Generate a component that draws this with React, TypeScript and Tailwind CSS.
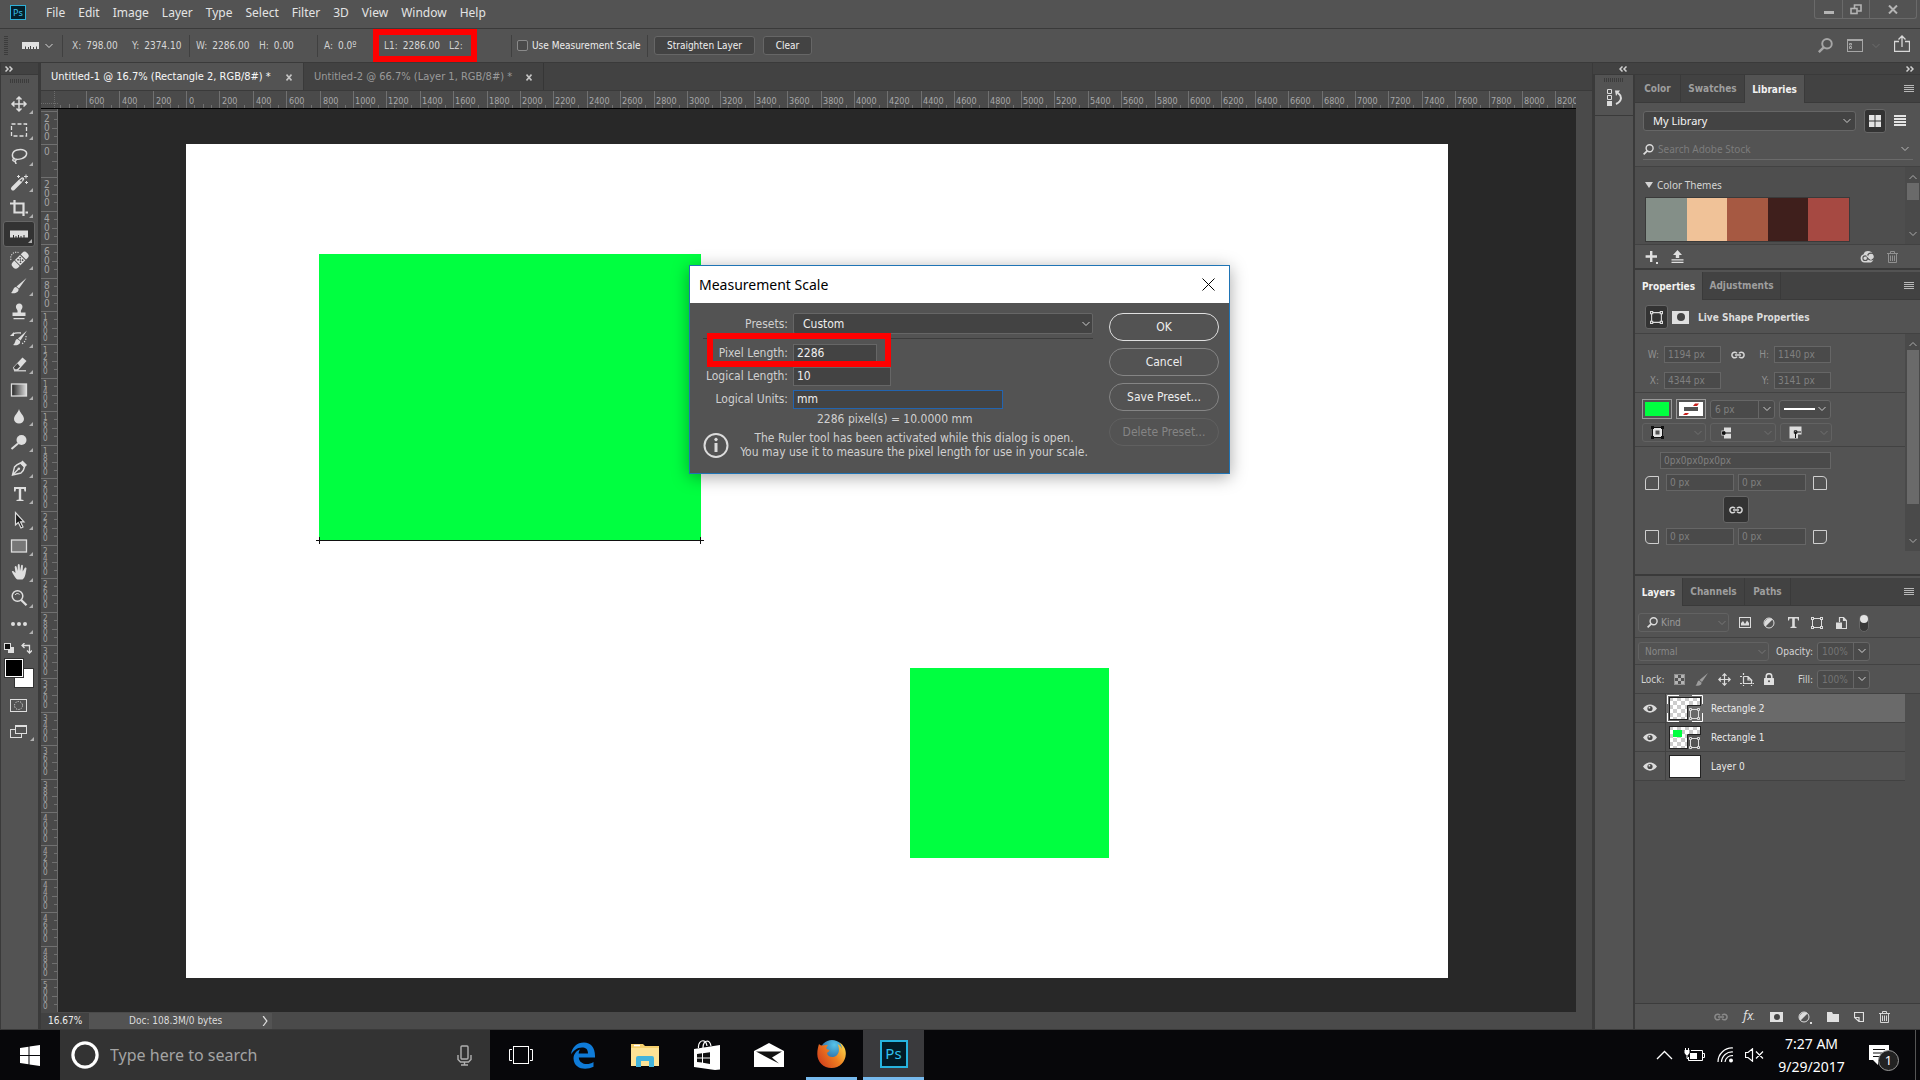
import React, { ReactNode } from "react";

const UI = 'font-["DejaVu_Sans_Condensed","Noto_Sans",sans-serif]';
const SEGOE = 'font-["Noto_Sans","Open_Sans",sans-serif]';

/* ---------- small shared pieces ---------- */

function Chevron({ className = "", dir = "down", size = 8 }: { className?: string; dir?: "down" | "up" | "right"; size?: number }) {
  const d = dir === "down" ? "M0.5 2 L4 5.5 L7.5 2" : dir === "up" ? "M0.5 6 L4 2.5 L7.5 6" : "M2.5 0 L5.5 4 L2.5 8";
  return (
    <svg width={size} height={size} viewBox="0 0 8 8" fill="none" stroke="currentColor" strokeWidth="1" className={`shrink-0 ${className}`} aria-hidden="true">
      <path d={d} />
    </svg>
  );
}

function Grip({ vertical = false }: { vertical?: boolean }) {
  return (
    <svg width={vertical ? 4 : 20} height={vertical ? 20 : 4} className="shrink-0" aria-hidden="true">
      {Array.from({ length: 10 }, (_, i) =>
        vertical ? <rect key={i} x="0" y={i * 2} width="4" height="1" fill="#3c3c3c" /> : <rect key={i} x={i * 2} y="0" width="1" height="4" fill="#3c3c3c" />,
      )}
    </svg>
  );
}

function DoubleArrow({ left = false }: { left?: boolean }) {
  return (
    <svg width="8" height="6" viewBox="0 0 8 6" fill="none" stroke="#d0d0d0" strokeWidth="1.5" className={left ? "-scale-x-100" : ""} aria-hidden="true">
      <path d="M0.5 0.5 L3 3 L0.5 5.5 M4.5 0.5 L7 3 L4.5 5.5" />
    </svg>
  );
}

function PanelMenu() {
  return (
    <button aria-label="Panel menu" className="ml-auto mr-[6px] flex h-full items-center">
      <svg width="10" height="8" aria-hidden="true">
        {[0, 2, 4, 6].map((y) => (
          <rect key={y} x="0" y={y} width="10" height="1" fill="#b8b8b8" />
        ))}
      </svg>
    </button>
  );
}

function Link({ color = "#d6d6d6" }: { color?: string }) {
  return (
    <svg width="14" height="8" viewBox="0 0 14 8" fill="none" stroke={color} strokeWidth="1.5" aria-hidden="true">
      <path d="M6 2.4 A2.8 2.8 0 1 0 6 5.6 M8 2.4 A2.8 2.8 0 1 1 8 5.6 M4 4 H10" />
    </svg>
  );
}

function Magnifier({ color = "#dcdcdc", size = 11 }: { color?: string; size?: number }) {
  return (
    <svg width={size} height={size} viewBox="0 0 11 11" fill="none" stroke={color} strokeWidth="1.4" className="shrink-0" aria-hidden="true">
      <circle cx="6.6" cy="4.2" r="3.5" />
      <path d="M4.2 6.8 L0.6 10.4" strokeWidth="1.8" />
    </svg>
  );
}

function ShapeIcon({ size = 12 }: { size?: number }) {
  return (
    <svg width={size} height={size} viewBox="0 0 12 12" fill="none" stroke="#dcdcdc" aria-hidden="true">
      <path d="M2.5 1.5 H9.5 M2.5 10.5 H9.5 M1.5 2.5 V9.5 M10.5 2.5 V9.5" />
      {[[0.5, 0.5], [9.5, 0.5], [0.5, 9.5], [9.5, 9.5]].map(([x, y]) => (
        <rect key={`${x}-${y}`} x={x} y={y} width="2" height="2" />
      ))}
    </svg>
  );
}

function Trash({ color = "#d6d6d6" }: { color?: string }) {
  return (
    <svg width="11" height="12" viewBox="0 0 11 12" fill="none" stroke={color} aria-hidden="true">
      <path d="M0 2.5 H11 M3.5 2 V0.5 H7.5 V2 M1.5 2.5 V11.5 H9.5 V2.5 M3.5 4.5 V10 M5.5 4.5 V10 M7.5 4.5 V10" />
    </svg>
  );
}

/* ---------- menu and options bars ---------- */

const menus = ["File", "Edit", "Image", "Layer", "Type", "Select", "Filter", "3D", "View", "Window", "Help"];

function MenuBar() {
  return (
    <header className={`flex h-[29px] shrink-0 items-start border-b border-[#3a3a3a] pl-[10px] pr-[3px] text-[12px] text-[#e4e4e4] ${SEGOE}`}>
      <span className="mt-[5px] flex h-[15px] w-4 items-center justify-center border border-[#2fb0d8] bg-[#03202c] text-[9px] text-[#3cc0ea]">Ps</span>
      <nav className="ml-5 flex h-[25px] items-center gap-[13px]">
        {menus.map((m) => (
          <button key={m}>{m}</button>
        ))}
      </nav>
      <div className="ml-auto flex h-[19px] rounded-b-[3px] border border-t-0 border-[#6a6a6a] text-[#b4b4b4]">
        <button aria-label="Minimize" className="flex w-7 justify-center border-r border-[#6a6a6a] pt-[11px]">
          <span className="h-[3px] w-[10px] bg-[#b4b4b4]" />
        </button>
        <button aria-label="Restore" className="flex w-[27px] justify-center border-r border-[#6a6a6a] pt-1">
          <svg width="12" height="11" viewBox="0 0 12 11" fill="none" stroke="currentColor" strokeWidth="1.6">
            <path d="M4.5 4 V1 H11 V7 H7.5" />
            <rect x="1" y="4.5" width="6" height="5" />
          </svg>
        </button>
        <button aria-label="Close" className="flex w-[46px] justify-center pt-[5px]">
          <svg width="10" height="9" viewBox="0 0 10 9" stroke="currentColor" strokeWidth="2">
            <path d="M1 0.5 L9 8.5 M9 0.5 L1 8.5" />
          </svg>
        </button>
      </div>
    </header>
  );
}

function Sep() {
  return <span className="h-[22px] w-px shrink-0 bg-[#404040]" />;
}

function RulerGlyph() {
  return (
    <svg width="17" height="7" viewBox="0 0 17 7" className="shrink-0" aria-hidden="true">
      <path d="M0 0 H17 V7 H0 Z" fill="#e0e0e0" />
      <path d="M3.5 4.5 V7 M6.5 5 V7 M8.5 4 V7 M11.5 5 V7 M14.5 4.5 V7" stroke="#444" />
    </svg>
  );
}

function Measure({ label, value, className }: { label: string; value: string; className: string }) {
  return (
    <span className={`flex shrink-0 gap-[5px] ${className}`}>
      <span className="text-[#cfcfcf]">{label}</span>
      <span>{value}</span>
    </span>
  );
}

function OptionsBar() {
  return (
    <div className={`flex h-[34px] shrink-0 items-center border-b border-[#3a3a3a] pl-1 pr-[10px] text-[10px] text-[#d8d8d8] ${UI}`}>
      <Grip vertical />
      <button aria-label="Ruler tool preset" className="ml-[14px] flex w-10 items-center gap-[6px]">
        <RulerGlyph />
        <Chevron />
      </button>
      <Sep />
      <Measure label="X:" value="798.00" className="ml-[9px] w-[60px]" />
      <Measure label="Y:" value="2374.10" className="w-[57px]" />
      <Sep />
      <Measure label="W:" value="2286.00" className="ml-[6px] w-[63px]" />
      <Measure label="H:" value="0.00" className="w-[58px]" />
      <Sep />
      <Measure label="A:" value="0.0º" className="ml-[6px] w-[49px]" />
      <div className="flex h-[33px] w-[104px] shrink-0 items-center border-[6px] border-[#fe0000] pl-[5px]">
        <Measure label="L1:" value="2286.00" className="w-[65px]" />
        <Measure label="L2:" value="" className="" />
      </div>
      <span className="w-[34px] shrink-0" />
      <Sep />
      <label className="ml-[5px] flex w-[130px] shrink-0 items-center gap-1 whitespace-nowrap text-[#ededed]">
        <input type="checkbox" className="h-[11px] w-[11px] shrink-0 appearance-none rounded-[2px] border border-[#8a8a8a] bg-[#4a4a4a]" />
        Use Measurement Scale
      </label>
      <Sep />
      <button className="ml-[6px] h-[19px] w-[101px] shrink-0 rounded-[3px] border border-[#666] bg-[#434343] text-[#f0f0f0]">Straighten Layer</button>
      <button className="ml-2 h-[19px] w-[49px] shrink-0 rounded-[3px] border border-[#666] bg-[#434343] text-[#f0f0f0]">Clear</button>
      <div className="ml-auto flex items-center">
        <button aria-label="Search">
          <Magnifier size={15} color="#a6a6a6" />
        </button>
        <button aria-label="Workspace" className="ml-[14px] flex items-center gap-[9px] text-[#6c6c6c]">
          <svg width="16" height="13" fill="none" stroke="#a6a6a6" aria-hidden="true">
            <rect x="0.5" y="0.5" width="15" height="12" />
            <path d="M0 1.5 H16 M2.5 4.5 h2 v1.5 h-2 z M2.5 7.5 h2 v2 h-2 z" />
          </svg>
          <Chevron />
        </button>
        <button aria-label="Share" className="mb-1 ml-[14px]">
          <svg width="16" height="17" fill="none" stroke="#d8d8d8" aria-hidden="true">
            <path d="M5 6.5 H0.5 V16.5 H15.5 V6.5 H11 M8 12 V1 M4.5 4.5 L8 1 L11.5 4.5" strokeWidth="1.3" />
          </svg>
        </button>
      </div>
    </div>
  );
}

/* ---------- tool bar ---------- */

const W = "#dedede";
const tools: { name: string; icon: ReactNode }[] = [
  { name: "Move", icon: <path d="M9 2 V16 M2 9 H16 M6.5 4.5 L9 2 L11.5 4.5 M6.5 13.5 L9 16 L11.5 13.5 M4.5 6.5 L2 9 L4.5 11.5 M13.5 6.5 L16 9 L13.5 11.5" strokeWidth="1.5" /> },
  { name: "Rectangular Marquee", icon: <rect x="1.5" y="3" width="15" height="12" strokeDasharray="4 2" strokeWidth="1.3" /> },
  { name: "Lasso", icon: <path d="M5 12 C1 10 1.5 4.5 7 3 C13 1.5 17.5 4 16.5 7.5 C15.5 11.5 9 13 5 12 C3 11 2 13 3.5 14 C5 15 7 13 5.5 12 M5 14 C5 15.5 6 15.5 6 17" strokeWidth="1.4" /> },
  {
    name: "Magic Wand",
    icon: (
      <>
        <path d="M3 15.5 L10 8.5" strokeWidth="4" strokeLinecap="round" />
        <path d="M10.5 8 L12.5 6" strokeWidth="3.5" strokeLinecap="round" />
        <path d="M9.5 8 L12.5 5.5 L12 8.5 Z" fill="#535353" stroke="none" />
        <path d="M8.5 2 v3 M7 3.5 h3 M16 1.5 v4 M14 3.5 h4 M16.5 8 v3 M15 9.5 h3" strokeWidth="1" />
      </>
    ),
  },
  { name: "Crop", icon: <path d="M4.5 1 V13.5 H14 M0 4.5 H13.5 V17 M15.5 13.5 H18" strokeWidth="2.2" /> },
  {
    name: "Ruler",
    icon: (
      <>
        <path d="M0 5.5 H18 V12.5 H0 Z" fill={W} stroke="none" />
        <path d="M3.5 10 V13 M6 11 V13 M8.5 10 V13 M11 11 V13 M14 10 V13" stroke="#333" strokeWidth="1" />
      </>
    ),
  },
  {
    name: "Spot Healing Brush",
    icon: (
      <>
        <g transform="rotate(-45 10 9)">
          <rect x="0" y="5.5" width="20" height="7.5" rx="3.2" fill={W} stroke="none" />
          <path d="M6 5 V13.5 M14 5 V13.5" stroke="#535353" strokeWidth="1" />
          <path d="M8 7.5 h1.5 M11 7.5 h1.5 M8 11 h1.5 M11 11 h1.5 M9.5 9.2 h1.5" stroke="#444" strokeWidth="1.5" />
        </g>
        <path d="M1 9 C-0.5 4 4 0 8.5 1.5" strokeDasharray="1.2 1.2" strokeWidth="1.1" />
      </>
    ),
  },
  {
    name: "Brush",
    icon: (
      <>
        <path d="M16.5 1 L9 11.5 L6.5 9.5 Z" fill={W} stroke="none" />
        <path d="M6 10 C3 10.5 3.5 14 1 16 C5.5 17 9 15 8.5 12 Z" fill={W} stroke="none" />
      </>
    ),
  },
  { name: "Clone Stamp", icon: <path d="M6 4.5 a3.3 3.3 0 1 1 6.4 0 C12 6.5 10.5 6.5 11 9.5 H15.5 V13 H2.5 V9.5 H7.5 C8 6.5 6.5 6.5 6 4.5 Z M3.5 15 H14.5 V16.3 H3.5 Z" fill={W} stroke="none" /> },
  {
    name: "History Brush",
    icon: (
      <>
        <path d="M17 1.5 L10.5 11.5 L8 9.5 Z M7.5 10 C4.5 10.5 6 14 3 16 C7.5 17 11 15 10 12 Z M0 7 L4 3 V7 Z" fill={W} stroke="none" />
        <path d="M3 5 C6 3 9 4 11 4" strokeWidth="1.3" />
        <path d="M16 7 C16.5 11 14 14 11.5 15" strokeDasharray="1.2 1.4" strokeWidth="1.2" />
      </>
    ),
  },
  {
    name: "Eraser",
    icon: (
      <>
        <path d="M3 12.5 L12.5 2.5 L16.5 6 L8 15.5 H4 Z" fill={W} stroke="none" />
        <path d="M5 11 L7.5 8.5 L10 11.5 L7 14.3 H5 L3.8 12.8 Z" fill="#444" stroke="none" />
        <path d="M4 15.8 H16" strokeWidth="1.2" />
      </>
    ),
  },
  {
    name: "Gradient",
    icon: (
      <>
        <defs>
          <linearGradient id="grad-tool">
            <stop offset="0" stopColor="#222" />
            <stop offset="1" stopColor="#ddd" />
          </linearGradient>
        </defs>
        <rect x="1.5" y="3" width="15" height="12" fill="url(#grad-tool)" strokeWidth="1.3" />
      </>
    ),
  },
  { name: "Blur", icon: <path d="M9 2 C10 6 14 8.5 14 12 A5 4.6 0 0 1 4 12 C4 8.5 8 6 9 2 Z" fill={W} stroke="none" /> },
  {
    name: "Dodge",
    icon: (
      <>
        <circle cx="11.5" cy="7" r="5" fill={W} stroke="none" />
        <path d="M8 10.5 L1.5 16" strokeWidth="2" />
      </>
    ),
  },
  {
    name: "Pen",
    icon: (
      <>
        <path d="M2.5 16 L4.5 8 C6 6 8 5 10.5 4 L14.5 8 C14 10.5 13 12.5 11 14 Z M3 15.5 L8.5 10" strokeWidth="1.4" />
        <path d="M10 4 L12.5 1.5 L17 6 L14.5 8.5 Z" fill={W} stroke="none" />
        <circle cx="8.8" cy="9.8" r="1.3" fill={W} stroke="none" />
      </>
    ),
  },
  { name: "Type", icon: <path d="M4 2 H16 V6.5 H14.5 L14 4 H11.2 V14.5 L13.5 15 V16 H6.5 V15 L8.8 14.5 V4 H6 L5.5 6.5 H4 Z" fill={W} stroke="none" /> },
  { name: "Path Selection", icon: <path d="M5.5 1.5 V14 L8.3 11.5 L11 17 L13 16 L10.5 10.8 H14 Z" fill="#1c1c1c" strokeWidth="1.2" /> },
  { name: "Rectangle", icon: <rect x="1.5" y="3" width="15" height="12" fill="#777" strokeWidth="1.3" /> },
  { name: "Hand", icon: <path d="M6.5 16 C4.5 14 3 11 1.8 8.6 C2 7.5 3.5 7.5 5.5 10 L4.7 4 C5 2.8 6.3 2.8 6.7 4 L7.5 8 L7.8 2 C8.1 0.8 9.5 0.8 9.7 2 L10 8 L11.2 2.3 C11.6 1.3 12.8 1.6 12.9 2.8 L12.7 8.5 L14.8 4.8 C15.5 4 16.5 4.5 16.5 5.5 L15.5 11 C15 14 13.5 16 12.5 16.5 H7.5 Z" fill={W} stroke="none" /> },
  {
    name: "Zoom",
    icon: (
      <>
        <circle cx="7.5" cy="7" r="5.3" strokeWidth="1.5" />
        <path d="M11.2 11 L16.5 16.3" strokeWidth="2.3" />
        <path d="M5 6 C6 4.3 8 4 9.5 5.5" strokeWidth="1" />
      </>
    ),
  },
  {
    name: "Edit Toolbar",
    icon: (
      <g fill={W} stroke="none">
        <circle cx="3" cy="9" r="2" />
        <circle cx="9" cy="9" r="2" />
        <circle cx="15" cy="9" r="2" />
      </g>
    ),
  },
];

function Corner() {
  return (
    <svg width="4" height="4" className="absolute bottom-[3px] right-[2px]" aria-hidden="true">
      <path d="M4 0 V4 H0 Z" fill="#b0b0b0" />
    </svg>
  );
}

function ToolBar() {
  return (
    <aside className="flex w-[41px] shrink-0 flex-col border-x border-r-[3px] border-[#3a3a3a]">
      <div className="flex h-3 items-center border-b border-[#3a3a3a] bg-[#424242] pl-1">
        <DoubleArrow />
      </div>
      <div className="flex h-4 items-start justify-center pt-1">
        <Grip />
      </div>
      <div className="flex flex-col items-center pr-[2px]">
        {tools.map((t) => (
          <button key={t.name} aria-label={t.name} className={`relative flex h-[26px] w-8 items-center justify-center ${t.name === "Ruler" ? "rounded-[3px] border border-[#666] bg-[#333]" : ""}`}>
            <svg width="18" height="18" viewBox="0 0 18 18" fill="none" stroke={W} aria-hidden="true" className="overflow-visible">
              {t.icon}
            </svg>
            <Corner />
          </button>
        ))}
      </div>
      <div className="mt-px flex h-5 items-center justify-between pl-[3px] pr-[6px]">
        <svg width="11" height="11" aria-hidden="true">
          <rect x="4" y="4" width="6" height="6" fill="#dedede" />
          <rect x="0.5" y="0.5" width="6" height="6" fill="#111" stroke="#dedede" />
        </svg>
        <svg width="11" height="11" fill="none" stroke="#dedede" aria-hidden="true">
          <path d="M1 2.5 H8.5 V10 M3.5 0 L1 2.5 L3.5 5 M6 7.5 L8.5 10 L11 7.5" strokeWidth="1.3" />
        </svg>
      </div>
      <div className="relative h-[30px]">
        <span className="absolute left-[13px] top-[10px] h-5 w-5 border border-[#333] bg-white" />
        <span className="absolute left-[3px] top-0 h-5 w-5 border border-[#333] bg-black outline-1 -outline-offset-2 outline-white" />
      </div>
      <div className="mt-1 flex flex-col items-center">
        <button aria-label="Quick mask" className="flex h-[26px] w-8 items-center justify-center pr-[2px]">
          <svg width="17" height="13" fill="none" stroke="#dedede" aria-hidden="true">
            <rect x="0.5" y="0.5" width="16" height="12" />
            <circle cx="8.5" cy="6.5" r="4" strokeDasharray="1.2 1.3" />
          </svg>
        </button>
        <button aria-label="Screen mode" className="relative flex h-[26px] w-8 items-center justify-center pr-[2px]">
          <svg width="17" height="13" fill="#535353" stroke="#dedede" aria-hidden="true">
            <rect x="0.5" y="4.5" width="11" height="8" />
            <rect x="5.5" y="0.5" width="11" height="8" />
            <path d="M5 1.5 H17" />
          </svg>
          <Corner />
        </button>
      </div>
    </aside>
  );
}

/* ---------- document area ---------- */

const STEP = 33.4;
const ORIGIN_X = 145;
const ORIGIN_Y = 35;

function TopRuler() {
  return (
    <svg width="100%" height="18" className={`block shrink-0 border-b border-black bg-[#4a4a4a] text-[9px] ${UI}`} aria-hidden="true">
      {Array.from({ length: 46 }, (_, i) => i - 4).map((n) => {
        const x = Math.round(ORIGIN_X + n * STEP);
        return (
          <g key={n}>
            {x > 17 && <rect x={x} y="0" width="1" height="17" fill="#707070" />}
            {[1, 2, 3].map((q) => {
              const mx = Math.round(x + (q * STEP) / 4);
              return mx > 17 && <rect key={q} x={mx} y={q === 2 ? 13 : 14} width="1" height={q === 2 ? 4 : 3} fill="#707070" />;
            })}
            {n > -4 && (
              <text x={x + (n > 4 ? 2 : 3)} y="13" fill="#a8a8a8">
                {Math.abs(n) * 200}
              </text>
            )}
          </g>
        );
      })}
      <rect width="17" height="18" fill="#4a4a4a" />
      <path d="M0 12.5 H17 M13.5 0 V18" stroke="#6c6c6c" strokeDasharray="1 1" />
    </svg>
  );
}

function SideRuler() {
  return (
    <svg width="17" height="100%" className={`block shrink-0 border-r border-[#6a6a6a] bg-[#4a4a4a] ${UI}`} aria-hidden="true">
      {Array.from({ length: 28 }, (_, i) => i - 1).map((n) => {
        const y = Math.round(ORIGIN_Y + n * STEP);
        const digits = n < 26 ? String(Math.abs(n) * 200).split("") : [];
        const small = digits.length > 3;
        return (
          <g key={n}>
            <rect x="0" y={y} width="17" height="1" fill="#707070" />
            {[1, 2, 3].map((q) => (
              <rect key={q} x={q === 2 ? 11 : 13} y={Math.round(y + (q * STEP) / 4)} width="6" height="1" fill="#707070" />
            ))}
            {digits.map((d, i) => (
              <text key={i} x={small ? 2 : 3} y={small ? y + 9 + i * 7 : y + 11 + i * 9} fontSize={small ? 8 : 10} fill="#a4a4a4">
                {d}
              </text>
            ))}
          </g>
        );
      })}
    </svg>
  );
}

function Field({ id, label, value, className, red = false }: { id: string; label: string; value: string; className: string; red?: boolean }) {
  return (
    <div className="relative flex h-5 items-center">
      <label htmlFor={id} className="w-[90px] shrink-0 whitespace-nowrap pr-[5px] text-right text-[#d0d0d0]">
        {label}
      </label>
      <input id={id} defaultValue={value} className={`h-[19px] border bg-[#434343] px-[3px] text-[#eee] outline-none ${className}`} />
      {red && <span className="absolute -top-[10px] left-[4px] h-[34px] w-[184px] border-[6px] border-[#fe0000]" />}
    </div>
  );
}

function ScaleDialog() {
  const button = "h-7 rounded-full border text-[12px]";
  return (
    <div role="dialog" aria-label="Measurement Scale" className={`absolute left-[631px] top-[156px] w-[541px] border border-[#1f74b5] bg-[#535353] text-[12px] shadow-[0_3px_16px_rgba(0,0,0,0.35)] ${UI}`}>
      <div className={`flex h-[37px] items-center justify-between bg-white pl-[9px] pr-[14px] text-[14px] text-black ${SEGOE}`}>
        Measurement Scale
        <button aria-label="Close dialog">
          <svg width="13" height="13" stroke="black" aria-hidden="true">
            <path d="M0.5 0.5 L12.5 12.5 M12.5 0.5 L0.5 12.5" />
          </svg>
        </button>
      </div>
      <div className="flex h-[170px] justify-between pr-[10px] pt-[10px]">
        <div className="ml-[13px] w-[400px]">
          <div className="flex items-center">
            <label htmlFor="presets" className="w-[90px] pr-[5px] text-right text-[#d0d0d0]">
              Presets:
            </label>
            <div className="relative">
              <select id="presets" className="block h-[21px] w-[300px] appearance-none rounded-[2px] border border-[#666] bg-[#434343] pl-[9px] text-[#eee]">
                <option>Custom</option>
              </select>
              <Chevron className="pointer-events-none absolute right-[3px] top-[7px] text-[#ccc]" />
            </div>
          </div>
          <div className="mr-[10px] mt-1 border-t border-[#3c3c3c]" />
          <div className="mt-1 flex flex-col gap-[3px]">
            <Field id="pixel-length" label="Pixel Length:" value="2286" className="w-[84px] border-[#666]" red />
            <Field id="logical-length" label="Logical Length:" value="10" className="w-[98px] border-[#666]" />
            <Field id="logical-units" label="Logical Units:" value="mm" className="w-[210px] border-[#2264b0]" />
          </div>
          <p className="mt-[3px] pl-[114px] leading-[15px] text-[#d0d0d0]">2286 pixel(s) = 10.0000 mm</p>
          <div className="mt-1 flex items-center">
            <svg width="26" height="27" viewBox="0 0 26 27" fill="none" stroke="#dcdcdc" className="shrink-0" aria-hidden="true">
              <circle cx="13" cy="13.5" r="11.5" strokeWidth="2" />
              <path d="M13 11 V20" strokeWidth="3" />
              <circle cx="13" cy="7.5" r="1.3" fill="#dcdcdc" />
            </svg>
            <p className="w-[370px] whitespace-nowrap text-center leading-[14px] text-[#d0d0d0]">
              The Ruler tool has been activated while this dialog is open.
              <br />
              You may use it to measure the pixel length for use in your scale.
            </p>
          </div>
        </div>
        <div className="flex w-[110px] shrink-0 flex-col gap-[7px] text-[#eee]">
          <button className={`${button} border-[#e0e0e0]`}>OK</button>
          <button className={`${button} border-[#858585]`}>Cancel</button>
          <button className={`${button} border-[#858585]`}>Save Preset...</button>
          <button disabled className={`${button} border-[#606060] text-[#858585]`}>
            Delete Preset...
          </button>
        </div>
      </div>
    </div>
  );
}

function TabClose() {
  return (
    <svg width="6" height="7" stroke="#c4c4c4" strokeWidth="1.6" className="shrink-0" aria-hidden="true">
      <path d="M0.5 0.5 L5.5 6.5 M5.5 0.5 L0.5 6.5" />
    </svg>
  );
}

function Workspace() {
  return (
    <section className="flex min-w-0 flex-1 flex-col border-r border-[#3a3a3a]">
      <div className={`flex h-7 shrink-0 border-b border-[#3a3a3a] bg-[#424242] text-[11px] ${UI}`}>
        <button className="flex w-[263px] items-center justify-between whitespace-nowrap border-r border-[#3a3a3a] bg-[#535353] pl-[10px] pr-[11px] pt-[2px] text-[#f8f8f8]">
          Untitled-1 @ 16.7% (Rectangle 2, RGB/8#) *<TabClose />
        </button>
        <button className="flex w-[240px] items-center justify-between whitespace-nowrap border-r border-[#363636] pl-[10px] pr-[11px] pt-[2px] text-[#9a9a9a]">
          Untitled-2 @ 66.7% (Layer 1, RGB/8#) *<TabClose />
        </button>
      </div>
      <div className="flex min-h-0 flex-1">
        <div className="flex min-w-0 flex-1 flex-col">
          <TopRuler />
          <div className="flex min-h-0 flex-1">
            <SideRuler />
            <div className="relative min-w-0 flex-1 overflow-hidden bg-[#282828]">
              <div className="absolute left-[128px] top-[35px] h-[834px] w-[1262px] bg-white" />
              <div className="absolute left-[261px] top-[145px] h-[286px] w-[382px] bg-[#00ff40]" />
              <div className="absolute left-[852px] top-[559px] h-[190px] w-[199px] bg-[#00ff40]" />
              <svg width="390" height="9" className="absolute left-[257px] top-[427px]" stroke="#111" aria-hidden="true">
                <path d="M1 4.5 H389 M4.5 1 V8 M385.5 1 V8" />
              </svg>
              <ScaleDialog />
            </div>
          </div>
          <div className={`flex h-[17px] shrink-0 items-center bg-[#4a4a4a] text-[10px] text-[#dcdcdc] ${UI}`}>
            <input aria-label="Zoom level" defaultValue="16.67%" className="h-4 w-12 bg-[#424242] pl-[7px] text-[#eee] outline-none" />
            <button className="flex h-4 w-[183px] items-center bg-[#535353] pl-[40px] pr-[2px]">
              Doc: 108.3M/0 bytes
              <Chevron dir="right" size={10} className="ml-auto" />
            </button>
          </div>
        </div>
        <div className="w-4 shrink-0 bg-[#4a4a4a]" />
      </div>
    </section>
  );
}

/* ---------- right-hand panels ---------- */

function Tabs({ items, active }: { items: { name: string; width: string }[]; active: string }) {
  return (
    <div role="tablist" className="flex h-7 shrink-0 bg-[#424242] text-[10px] font-bold">
      {items.map(({ name, width }) => (
        <button
          key={name}
          role="tab"
          aria-selected={name === active}
          className={`${width} shrink-0 whitespace-nowrap border-r border-[#3a3a3a] text-center ${name === active ? "bg-[#535353] text-[#f2f2f2]" : "border-b text-[#9e9e9e]"}`}
        >
          {name}
        </button>
      ))}
      <div className="flex flex-1 border-b border-[#3a3a3a]">
        <PanelMenu />
      </div>
    </div>
  );
}

function ScrollBar({ thumb }: { thumb: string }) {
  return (
    <div className="flex w-[15px] shrink-0 flex-col items-center bg-[#4a4a4a] py-[6px] text-[#aaa]">
      <Chevron dir="up" />
      <div className={`my-[2px] w-3 shrink-0 bg-[#6a6a6a] ${thumb}`} />
      <Chevron className="mt-auto" />
    </div>
  );
}

function LibrariesPanel() {
  return (
    <section className="flex h-[195px] shrink-0 flex-col border-b-2 border-[#3a3a3a]">
      <Tabs
        active="Libraries"
        items={[
          { name: "Color", width: "w-[46px]" },
          { name: "Swatches", width: "w-16" },
          { name: "Libraries", width: "w-[60px]" },
        ]}
      />
      <div className="flex h-[30px] shrink-0 items-end gap-2 pl-2">
        <div className={`relative mb-[2px] ${SEGOE}`}>
          <select aria-label="Library" className="block h-5 w-[213px] appearance-none rounded-[3px] border border-[#666] bg-[#434343] pl-[9px] text-[11px] text-[#f4f4f4]">
            <option>My Library</option>
          </select>
          <Chevron className="pointer-events-none absolute right-[5px] top-[6px] text-[#ccc]" />
        </div>
        <button aria-label="Grid view" className="flex h-6 w-[22px] items-center justify-center rounded-[3px] border border-[#666] bg-[#333]">
          <svg width="12" height="12" fill="#e4e4e4" aria-hidden="true">
            <path d="M0 0 h5.5 v5.5 h-5.5z M6.5 0 h5.5 v5.5 h-5.5z M0 6.5 h5.5 v5.5 h-5.5z M6.5 6.5 h5.5 v5.5 h-5.5z" />
          </svg>
        </button>
        <button aria-label="List view" className="flex h-6 items-center">
          <svg width="12" height="12" fill="#e4e4e4" aria-hidden="true">
            <path d="M0 0 h12 v2 h-12z M0 3 h12 v2 h-12z M0 6 h12 v2 h-12z M0 9 h12 v2 h-12z" />
          </svg>
        </button>
      </div>
      <div className="ml-2 mr-[7px] mt-[6px] flex h-[21px] shrink-0 items-center gap-1 border-b border-[#6a6a6a]">
        <Magnifier />
        <input placeholder="Search Adobe Stock" aria-label="Search Adobe Stock" className={`min-w-0 flex-1 bg-transparent text-[10px] text-[#ddd] outline-none placeholder:text-[#7c7c7c] ${SEGOE}`} />
        <Chevron className="mr-1 text-[#bbb]" />
      </div>
      <div className="mt-[6px] flex h-[79px] shrink-0 justify-between border-y border-[#424242] bg-[#4e4e4e]">
        <div className="pl-[10px]">
          <button className={`flex h-[30px] items-center gap-1 pt-[6px] text-[10px] text-[#d4d4d4] ${SEGOE}`}>
            <svg width="8" height="6" aria-hidden="true">
              <path d="M0 0 H8 L4 6 Z" fill="#d4d4d4" />
            </svg>
            Color Themes
          </button>
          <div className="flex h-[45px] w-[205px] border border-[#3a3a3a]">
            <span className="flex-1 bg-[#848f88]" />
            <span className="flex-1 bg-[#f0c298]" />
            <span className="flex-1 bg-[#a65942]" />
            <span className="flex-1 bg-[#3f1f1c]" />
            <span className="flex-1 bg-[#a64942]" />
          </div>
        </div>
        <ScrollBar thumb="h-[17px]" />
      </div>
      <div className="flex flex-1 items-center pl-[10px] pr-[22px]">
        <button aria-label="Add content">
          <svg width="14" height="14" aria-hidden="true">
            <path d="M5 1 h2.4 v4.3 H12 v2.4 H7.4 V12 H5 V7.7 H0.6 V5.3 H5z M11 12 h2 v2 h-2z" fill="#e0e0e0" />
          </svg>
        </button>
        <button aria-label="Upload" className="ml-3">
          <svg width="13" height="13" fill="#e0e0e0" aria-hidden="true">
            <path d="M6.5 0 L11 5 H8.2 V8 H4.8 V5 H2 Z M0.5 9.3 h12 v1.2 h-12z M0.5 11.8 h12 v1.2 h-12z" />
          </svg>
        </button>
        <svg width="17" height="13" viewBox="0 0 17 13" fill="none" className="ml-auto" aria-label="Creative Cloud">
          <path d="M5 1.8 A6 6 0 1 1 11 12.5 H4.5 A4.2 4.2 0 0 1 3.6 4.3 Q4 2.8 5 1.8 Z" fill="#d6d6d6" />
          <circle cx="11" cy="6.5" r="3.4" stroke="#535353" strokeWidth="1.2" />
          <circle cx="5.2" cy="8.2" r="2.3" stroke="#535353" strokeWidth="1.1" />
          <path d="M6.5 5.5 L11.5 9.6" stroke="#d6d6d6" strokeWidth="1.4" />
        </svg>
        <button aria-label="Delete" className="ml-[10px]">
          <Trash color="#909090" />
        </button>
      </div>
    </section>
  );
}

const inputBox = "h-[17px] border border-[#666] bg-[#4a4a4a] px-[3px] text-[10px] text-[#808080] outline-none";

function Labeled({ id, label, value }: { id: string; label: string; value: string }) {
  return (
    <div className="flex items-center">
      <label htmlFor={id} className="w-[19px] pr-[5px] text-right text-[#909090]">
        {label}
      </label>
      <input id={id} defaultValue={value} className={`${inputBox} w-[57px]`} />
    </div>
  );
}

function RoundCorner({ turn }: { turn: string }) {
  return (
    <svg width="14" height="14" fill="none" stroke="#cfcfcf" className={`shrink-0 ${turn}`} aria-hidden="true">
      <path d="M0.5 13.5 V5 Q0.5 0.5 5 0.5 H13.5 V13.5 Z" />
    </svg>
  );
}

function IconSelect({ label, width, children }: { label: string; width: string; children: ReactNode }) {
  return (
    <button aria-label={label} className={`flex h-[19px] items-center justify-between rounded-[3px] border border-[#626262] pl-2 pr-[3px] text-[#707070] ${width}`}>
      {children}
      <Chevron />
    </button>
  );
}

function PropertiesPanel() {
  return (
    <section className="flex h-[306px] shrink-0 flex-col border-b-2 border-[#3a3a3a] pt-[2px]">
      <Tabs
        active="Properties"
        items={[
          { name: "Properties", width: "w-[68px]" },
          { name: "Adjustments", width: "w-[78px]" },
        ]}
      />
      <div className="flex h-[34px] shrink-0 items-center border-b border-[#424242] pl-[10px] pt-px text-[10px] text-[#dcdcdc]">
        <span className="flex h-6 w-[23px] items-center justify-center rounded-[3px] border border-[#666] bg-[#333]">
          <ShapeIcon size={13} />
        </span>
        <span className="ml-1 flex h-[13px] w-[17px] items-center justify-center bg-[#e0e0e0]">
          <span className="h-2 w-2 rounded-full bg-[#444]" />
        </span>
        <span className="ml-[9px] font-bold">Live Shape Properties</span>
      </div>
      <div className="flex h-[217px]">
        <div className="flex-1 text-[10px]">
          <div className="h-[59px] border-b border-[#424242] pl-[10px] pt-3">
            <div className="flex items-center">
              <Labeled id="w" label="W:" value="1194 px" />
              <span className="mx-[10px]">
                <Link />
              </span>
              <Labeled id="h" label="H:" value="1140 px" />
            </div>
            <div className="mt-[9px] flex items-center gap-[34px]">
              <Labeled id="x" label="X:" value="4344 px" />
              <Labeled id="y" label="Y:" value="3141 px" />
            </div>
          </div>
          <div className="h-[54px] border-b border-[#424242] pl-[7px] pt-[6px]">
            <div className="flex items-center">
              <button aria-label="Fill color" className="h-5 w-[30px] border border-[#9a9a9a] p-[2px]">
                <span className="block h-full bg-[#00ff40]" />
              </button>
              <button aria-label="Stroke color" className="ml-1 h-5 w-[30px] border border-[#9a9a9a] p-[2px]">
                <svg width="24" height="14" className="block bg-white" aria-hidden="true">
                  <rect x="5" y="5" width="14" height="4" fill="#535353" />
                  <path d="M4 13 L6 11 H10 L8 13 Z M14 4 L16 1.5 H20 L18 4 Z" fill="#c8201c" />
                </svg>
              </button>
              <div className="ml-1 flex h-[19px] w-[65px] items-center rounded-[3px] border border-[#666] bg-[#4a4a4a]">
                <input aria-label="Stroke width" defaultValue="6 px" className="w-[47px] pl-1 text-[#808080] outline-none" />
                <span className="flex h-full flex-1 items-center justify-center border-l border-[#666] text-[#ccc]">
                  <Chevron />
                </span>
              </div>
              <button aria-label="Stroke type" className="ml-1 flex h-[19px] w-[52px] items-center justify-between rounded-[3px] border border-[#666] bg-[#4a4a4a] px-1 text-[#ccc]">
                <span className="h-[2px] w-[31px] bg-white" />
                <Chevron />
              </button>
            </div>
            <div className="mt-1 flex gap-1">
              <IconSelect label="Stroke alignment" width="w-[64px]">
                <svg width="13" height="13" fill="none" aria-hidden="true">
                  <rect x="1.5" y="1.5" width="10" height="10" fill="#e4e4e4" stroke="#111" />
                  <rect x="4.5" y="4.5" width="4" height="4" fill="#535353" />
                  <path d="M0 0h3v3h-3z M10 0h3v3h-3z M0 10h3v3h-3z M10 10h3v3h-3z" fill="#111" />
                </svg>
              </IconSelect>
              <IconSelect label="Stroke caps" width="w-[66px]">
                <svg width="12" height="12" className="ml-[2px]" aria-hidden="true">
                  <path d="M3 0.5 H10 V11.5 H3 V8.5 H0.5 V3.5 H3 Z" fill="#dcdcdc" />
                  <path d="M1.5 6 H10 M1.5 4.8 h2.5 v2.5 h-2.5z" stroke="#111" fill="#111" />
                </svg>
              </IconSelect>
              <IconSelect label="Stroke corners" width="w-[52px]">
                <svg width="13" height="13" aria-hidden="true">
                  <path d="M0.5 0.5 H12.5 V8.5 H9 V12.5 H0.5 Z" fill="#dcdcdc" />
                  <path d="M6.5 12 V6 H12 M5.3 4.8 h2.5 v2.5 h-2.5z" stroke="#111" fill="none" />
                </svg>
              </IconSelect>
            </div>
          </div>
          <div className="flex flex-col gap-[5px] pl-[10px] pt-[5px]">
            <input aria-label="All corner radii" defaultValue="0px0px0px0px" className={`${inputBox} ml-[15px] w-[171px]`} />
            <div className="flex items-center">
              <RoundCorner turn="" />
              <input aria-label="Top left radius" defaultValue="0 px" className={`${inputBox} ml-[7px] w-[68px]`} />
              <input aria-label="Top right radius" defaultValue="0 px" className={`${inputBox} ml-1 mr-[7px] w-[68px]`} />
              <RoundCorner turn="rotate-90" />
            </div>
            <button aria-label="Link radii" className="ml-[78px] flex h-[27px] w-[26px] items-center justify-center rounded-[3px] border border-[#666] bg-[#333]">
              <Link />
            </button>
            <div className="flex items-center">
              <RoundCorner turn="-rotate-90" />
              <input aria-label="Bottom left radius" defaultValue="0 px" className={`${inputBox} ml-[7px] w-[68px]`} />
              <input aria-label="Bottom right radius" defaultValue="0 px" className={`${inputBox} ml-1 mr-[7px] w-[68px]`} />
              <RoundCorner turn="rotate-180" />
            </div>
          </div>
        </div>
        <ScrollBar thumb="h-[154px]" />
      </div>
    </section>
  );
}

function Percent({ id, label, width }: { id: string; label: string; width: string }) {
  return (
    <div className="flex items-center text-[#d4d4d4]">
      <label htmlFor={id} className={`shrink-0 whitespace-nowrap pr-1 text-right ${width}`}>
        {label}
      </label>
      <div className="flex h-[19px] w-[53px] rounded-[3px] border border-[#666] bg-[#4a4a4a]">
        <input id={id} defaultValue="100%" className="w-[35px] pl-1 text-[#747474] outline-none" />
        <span className="flex flex-1 items-center justify-center border-l border-[#666]">
          <Chevron />
        </span>
      </div>
    </div>
  );
}

function Eye() {
  return (
    <svg width="14" height="9" viewBox="0 0 14 9" aria-hidden="true">
      <path d="M0 4.5 C3.5 -1 10.5 -1 14 4.5 C10.5 10 3.5 10 0 4.5 Z" fill="#dcdcdc" />
      <circle cx="7" cy="4.5" r="2.6" fill="#484848" />
      <circle cx="6.4" cy="3.7" r="0.9" fill="#dcdcdc" />
    </svg>
  );
}

function Thumb({ kind }: { kind: "empty" | "green" | "white" }) {
  return (
    <svg width="32" height="23" className="block shrink-0 overflow-visible" aria-hidden="true">
      <defs>
        <pattern id={`checks-${kind}`} width="8" height="8" patternUnits="userSpaceOnUse">
          <rect width="8" height="8" fill="#fff" />
          <path d="M0 0 h4 v4 h-4z M4 4 h4 v4 h-4z" fill="#ccc" />
        </pattern>
      </defs>
      <rect x="0.5" y="0.5" width="31" height="22" fill={kind === "white" ? "#fff" : `url(#checks-${kind})`} stroke="#222" />
      {kind === "green" && <rect x="4" y="4" width="9" height="7" fill="#00ff40" />}
      {kind !== "white" && (
        <g fill="none" stroke="#dcdcdc">
          <rect x="18" y="9" width="15" height="15" fill={kind === "empty" ? "#6a6a6a" : "#535353"} stroke="none" />
          <path d="M18.5 23 V8.5 H32" stroke="#222" />
          <path d="M22 12.5 H29 M22 21.5 H29 M21.5 13 V21 M29.5 13 V21" />
          <path d="M20.5 11.5 h2 v2 h-2z M28.5 11.5 h2 v2 h-2z M20.5 20.5 h2 v2 h-2z M28.5 20.5 h2 v2 h-2z" />
        </g>
      )}
      {kind === "empty" && <path d="M-1.5 7 V-1.5 H10 M23 -1.5 H33.5 V7 M-1.5 16 V24.5 H10 M23 24.5 H33.5 V16" fill="none" stroke="#fff" />}
    </svg>
  );
}

function LayersPanel() {
  return (
    <section className="flex min-h-0 flex-1 flex-col pt-[2px] text-[10px]">
      <Tabs
        active="Layers"
        items={[
          { name: "Layers", width: "w-12" },
          { name: "Channels", width: "w-[62px]" },
          { name: "Paths", width: "w-[46px]" },
        ]}
      />
      <div className="flex h-8 shrink-0 items-center border-b border-[#424242] pl-[3px] pt-[2px]">
        <div className="relative">
          <select aria-label="Filter kind" className="block h-[19px] w-[91px] appearance-none rounded-[3px] border border-[#626262] pl-[22px] text-[#9a9a9a]">
            <option>Kind</option>
          </select>
          <span className="pointer-events-none absolute left-[9px] top-1">
            <Magnifier />
          </span>
          <Chevron className="pointer-events-none absolute right-[3px] top-[6px] text-[#777]" />
        </div>
        <div className="ml-[10px] flex w-[130px] items-center justify-between">
          <svg width="12" height="11" fill="none" stroke="#dcdcdc" aria-label="Pixel layers">
            <rect x="0.5" y="0.5" width="11" height="10" />
            <path d="M2 8.5 V6 L4 4 L6 7 L8 3.5 L10 6 V8.5 Z" fill="#dcdcdc" stroke="none" />
          </svg>
          <svg width="12" height="12" fill="none" stroke="#dcdcdc" aria-label="Adjustment layers">
            <circle cx="6" cy="6" r="5" />
            <path d="M2.5 9.5 L9.5 2.5 A5 5 0 0 0 2.5 9.5 Z" fill="#dcdcdc" stroke="none" />
          </svg>
          <svg width="11" height="11" aria-label="Type layers">
            <path d="M0 0 H11 V3.5 H10 L9.5 1.5 H6.8 V9.5 L8.5 10 V11 H2.5 V10 L4.2 9.5 V1.5 H1.5 L1 3.5 H0 Z" fill="#dcdcdc" />
          </svg>
          <ShapeIcon />
          <svg width="11" height="12" fill="none" stroke="#dcdcdc" aria-label="Smart objects">
            <path d="M3.5 5 V0.5 H7.5 L10.5 3.5 V11.5 H6 M7.5 0.5 V3.5 H10.5" strokeWidth="1.2" />
            <rect x="0" y="5.5" width="6" height="6.5" fill="#dcdcdc" stroke="none" />
          </svg>
          <button aria-label="Toggle filter" className="flex h-[18px] w-[10px] items-start justify-center rounded-full border border-[#666] bg-[#383838]">
            <span className="h-2 w-2 rounded-full bg-[#e4e4e4]" />
          </button>
        </div>
      </div>
      <div className="flex h-[27px] shrink-0 items-center border-b border-[#424242] pl-[3px]">
        <div className="relative">
          <select aria-label="Blend mode" className="block h-[19px] w-[131px] appearance-none rounded-[3px] border border-[#626262] pl-[6px] text-[#888]">
            <option>Normal</option>
          </select>
          <Chevron className="pointer-events-none absolute right-[3px] top-[6px] text-[#777]" />
        </div>
        <Percent id="opacity" label="Opacity:" width="w-[48px]" />
      </div>
      <div className="flex h-[29px] shrink-0 items-center border-b border-[#424242] pl-[6px] text-[#d4d4d4]">
        <span className="w-[33px]">Lock:</span>
        <div className="flex w-[100px] items-center justify-between">
          <svg width="11" height="11" aria-label="Lock transparency">
            <rect x="0.5" y="0.5" width="10" height="10" fill="none" stroke="#909090" />
            <path d="M1 1h3v3h-3z M7 1h3v3h-3z M4 4h3v3h-3z M1 7h3v3h-3z M7 7h3v3h-3z" fill="#b4b4b4" />
          </svg>
          <svg width="13" height="13" fill="#9c9c9c" aria-label="Lock pixels">
            <path d="M13 0 L7 9 L4.5 7 Z M4 7.5 C2 8 2.5 11 0.5 12.5 C4 13.5 7 12 6.5 9.5 Z" />
          </svg>
          <svg width="13" height="13" viewBox="1 1 16 16" fill="none" stroke="#dcdcdc" strokeWidth="1.5" aria-label="Lock position">
            <path d="M9 2 V16 M2 9 H16 M6.5 4.5 L9 2 L11.5 4.5 M6.5 13.5 L9 16 L11.5 13.5 M4.5 6.5 L2 9 L4.5 11.5 M13.5 6.5 L16 9 L13.5 11.5" />
          </svg>
          <svg width="14" height="13" fill="none" stroke="#dcdcdc" aria-label="Lock artboard">
            <path d="M3.5 0 V2 M0 3.5 H2 M3.5 3.5 V10.5 H11.5 V7 M3.5 3.5 H8 L11.5 7 H8 V3.5 M12.5 10.5 H14 M11.5 12 V13 M0 10.5 H2 M3.5 12 V13" strokeWidth="1.2" />
          </svg>
          <svg width="10" height="12" aria-label="Lock all">
            <rect x="0" y="5" width="10" height="7" rx="0.5" fill="#e0e0e0" />
            <path d="M2.2 5 V3.5 A2.8 2.8 0 0 1 7.8 3.5 V5" fill="none" stroke="#e0e0e0" strokeWidth="1.5" />
            <circle cx="5" cy="8.3" r="1" fill="#535353" />
          </svg>
        </div>
        <Percent id="fill" label="Fill:" width="w-[43px]" />
      </div>
      <div className="min-h-0 flex-1 bg-[#4e4e4e]">
        {[
          { name: "Rectangle 2", kind: "empty" as const, on: true },
          { name: "Rectangle 1", kind: "green" as const, on: false },
          { name: "Layer 0", kind: "white" as const, on: false },
        ].map((l) => (
          <div key={l.name} className="mr-[15px] flex h-[29px] items-center border-b border-[#424242] bg-[#535353] text-[#eaeaea]">
            <button aria-label={`Toggle ${l.name}`} className="flex h-full w-[31px] items-center justify-center border-r border-[#424242]">
              <Eye />
            </button>
            <div className={`flex h-full flex-1 items-center gap-[10px] pl-[3px] ${l.on ? "bg-[#6a6a6a]" : ""}`}>
              <Thumb kind={l.kind} />
              {l.name}
            </div>
          </div>
        ))}
      </div>
      <div className="flex h-[26px] shrink-0 items-center justify-end gap-[15px] border-t border-[#3c3c3c] pr-[30px]">
        <button aria-label="Link layers">
          <Link color="#8a8a8a" />
        </button>
        <button aria-label="Layer style" className={`text-[12px] italic leading-3 text-[#e0e0e0] ${SEGOE}`}>
          fx<span className="text-[8px]">.</span>
        </button>
        <button aria-label="Add mask" className="flex h-[10px] w-[13px] items-center justify-center bg-[#e0e0e0]">
          <span className="h-[6px] w-[6px] rounded-full bg-[#444]" />
        </button>
        <button aria-label="New adjustment layer">
          <svg width="14" height="14" fill="none" stroke="#dcdcdc" aria-hidden="true">
            <circle cx="6" cy="7" r="5" />
            <path d="M2.5 10.5 L9.5 3.5 A5 5 0 0 0 2.5 10.5 Z" fill="#dcdcdc" stroke="none" />
            <rect x="12" y="12" width="2" height="2" fill="#dcdcdc" stroke="none" />
          </svg>
        </button>
        <button aria-label="New group">
          <svg width="12" height="10" fill="#e0e0e0" aria-hidden="true">
            <path d="M0 0 H5 L6 2 H12 V10 H0 Z" />
          </svg>
        </button>
        <button aria-label="New layer">
          <svg width="10" height="10" fill="none" stroke="#e0e0e0" aria-hidden="true">
            <path d="M0.5 5 V0.5 H9.5 V9.5 H5 L0.5 5.5 H5 V9.5" strokeWidth="1.2" />
          </svg>
        </button>
        <button aria-label="Delete layer">
          <Trash />
        </button>
      </div>
    </section>
  );
}

function RightDock() {
  return (
    <aside className={`flex w-[327px] shrink-0 flex-col ${UI}`}>
      <div className="flex h-3 shrink-0 items-center justify-between border-b border-[#3a3a3a] bg-[#424242] pl-[26px] pr-[6px]">
        <DoubleArrow left />
        <DoubleArrow />
      </div>
      <div className="flex min-h-0 flex-1">
        <div className="w-[42px] shrink-0 border-x-2 border-[#3a3a3a]">
          <div className="flex h-[41px] flex-col items-center gap-[7px] border-b border-[#3a3a3a] pt-[3px]">
            <Grip />
            <button aria-label="History">
              <svg width="15" height="17" fill="none" stroke="#dcdcdc" aria-hidden="true">
                <path d="M0.5 0.5 h4 v4 h-4z M0.5 6.5 h4 v4 h-4z" />
                <rect x="0" y="12" width="5" height="5" fill="#dcdcdc" stroke="none" />
                <path d="M8 1.5 H13 L9 7 Z" fill="#dcdcdc" stroke="none" />
                <path d="M11 4 C15 7 15.5 12 9 15" strokeWidth="2" />
              </svg>
            </button>
          </div>
        </div>
        <div className="flex min-w-0 flex-1 flex-col">
          <LibrariesPanel />
          <PropertiesPanel />
          <LayersPanel />
        </div>
      </div>
    </aside>
  );
}

/* ---------- Windows task bar ---------- */

function Task({ label, children }: { label: string; children: ReactNode }) {
  return (
    <button aria-label={label} className="flex w-[62px] items-center justify-center">
      {children}
    </button>
  );
}

function TaskBar() {
  return (
    <footer className={`flex h-[50px] shrink-0 bg-[#07070a] text-white ${SEGOE}`}>
      <button aria-label="Start" className="flex w-[60px] items-center justify-center">
        <svg width="20" height="21" fill="#fff" aria-hidden="true">
          <path d="M0 3 L8.5 1.8 V10 H0 Z M9.5 1.6 L20 0 V10 H9.5 Z M0 11 H8.5 V19.2 L0 18 Z M9.5 11 H20 V21 L9.5 19.4 Z" />
        </svg>
      </button>
      <label className="flex w-[430px] items-center bg-[#333] pl-[11px] pr-[18px]">
        <svg width="28" height="28" fill="none" stroke="#fff" aria-hidden="true">
          <circle cx="14" cy="14" r="13" stroke="#999" strokeWidth="1.5" />
          <circle cx="14" cy="14" r="12" strokeWidth="3" />
        </svg>
        <input placeholder="Type here to search" aria-label="Type here to search" className="ml-[11px] min-w-0 flex-1 bg-transparent text-[16px] outline-none placeholder:text-[#a4a4a4]" />
        <svg width="15" height="21" fill="none" stroke="#b0b0b0" strokeWidth="1.4" aria-hidden="true">
          <rect x="4" y="1" width="7" height="13" rx="1" />
          <path d="M1 10 V14.5 L3.5 17 H11.5 L14 14.5 V10 M7.5 17 V20 M4 20 H11" />
        </svg>
      </label>
      <Task label="Task view">
        <svg width="24" height="18" fill="none" stroke="#fff" aria-hidden="true">
          <rect x="4.5" y="0.5" width="15" height="17" />
          <path d="M3 3.5 H0.5 V14.5 H3 M21 3.5 H23.5 V14.5 H21" />
        </svg>
      </Task>
      <Task label="Edge">
        <svg width="26" height="27" viewBox="0 0 26 27" aria-hidden="true">
          <path d="M1 12.5 C2 5 7 0.5 14 0.5 C21 0.5 25.5 6 25 15.5 H8.8 C9 22 17.5 24 23.5 20 V24.8 C16 28.5 4 27.5 3.5 16.5 C3.6 12 6.5 8.5 10 7.5 C9 9 8.7 10.5 8.7 11.5 H18 C18 7 15.5 5.5 12 5.5 C7 5.5 3 9 1 12.5 Z" fill="#0f7bd8" />
        </svg>
      </Task>
      <Task label="File Explorer">
        <svg width="28" height="25" aria-hidden="true">
          <path d="M0 1 H12 L14 3 H28 V22 H0 Z" fill="#f5cf6c" />
          <path d="M0 5 H28 V23 H0 Z" fill="#fde396" />
          <path d="M3 1.8 h6 v1.5 h-6z" fill="#fff" />
          <path d="M5 24 V15 Q5 13 7 13 H21 Q23 13 23 15 V24 H18 V18 H10 V24 Z" fill="#43b4dc" />
        </svg>
      </Task>
      <Task label="Store">
        <svg width="26" height="30" aria-hidden="true">
          <path d="M0 9 L26 5 V29.5 L21 30 L0 27 Z" fill="#fff" />
          <path d="M4.5 8 C4 3 7 0.5 9.5 0.8 C12 1 12.5 3 13 6 M9 8 C9 3 11 1 13.5 1 C16 1.5 16.5 4 17 6" fill="none" stroke="#fff" strokeWidth="1.2" />
          <path d="M3 14 L8 13.3 V17.5 H3 Z M9 13.2 L16 12.2 V17.5 H9 Z M3 18.5 H8 V22.5 L3 22 Z M9 18.5 H16 V24 L9 22.8 Z" fill="#111" />
        </svg>
      </Task>
      <Task label="Mail">
        <svg width="30" height="24" aria-hidden="true">
          <path d="M0 8 L15 0 L30 8 V24 H0 Z" fill="#fff" />
          <path d="M2 8.5 H28 L18 14.5 L25 20.5 L15.5 15.8 Z" fill="#111" />
        </svg>
      </Task>
      <button aria-label="Firefox" className="ml-[6px] flex w-[51px] items-center justify-center border-b-[3px] border-[#76b9ed]">
        <svg width="29" height="28" viewBox="0 0 29 28" aria-hidden="true">
          <defs>
            <linearGradient id="fox" x1="0" y1="0.8" x2="1" y2="0.2">
              <stop offset="0" stopColor="#cf3c1c" />
              <stop offset="0.55" stopColor="#ee7d20" />
              <stop offset="1" stopColor="#fbd64a" />
            </linearGradient>
            <radialGradient id="globe" cx="0.6" cy="0.2" r="0.9">
              <stop offset="0" stopColor="#56c4ea" />
              <stop offset="1" stopColor="#1a4285" />
            </radialGradient>
          </defs>
          <circle cx="15" cy="12" r="12" fill="url(#globe)" />
          <path d="M2 4 C3 5 4 5.5 6 5.5 C8 4.5 10 5 11 5 C10 6.5 9 7.5 9.5 9 L12.5 10 C12.5 11.5 11 12 10 13 C10.5 17.5 17 18.5 20 15 C23 12 22 7 20.5 4 C23.5 5.5 25 8 25 9.5 C25 6.5 24 4 22 2 C27 5 29 9.5 28.8 14 C28.5 22 22.5 28 14.5 28 C6.5 28 0.3 22 0.3 14 C0.3 10 1.2 6.5 2 4 Z" fill="url(#fox)" />
        </svg>
      </button>
      <button aria-label="Photoshop" className="ml-[6px] flex w-[61px] items-center justify-center border-b-[3px] border-[#76b9ed] bg-[#3a3a3d]">
        <span className="flex h-7 w-7 items-center justify-center border-2 border-[#26b4e0] bg-[#021b26] text-[15px] text-[#31c0ee]">Ps</span>
      </button>
      <div className="ml-auto flex items-center">
        <svg width="17" height="10" fill="none" stroke="#fff" strokeWidth="1.3" aria-label="Show hidden icons">
          <path d="M1 9 L8.5 1.5 L16 9" />
        </svg>
        <svg width="21" height="14" fill="none" stroke="#fff" className="ml-[11px]" aria-label="Battery">
          <path d="M7 2.5 H18.5 V12.5 H4.5 V9 M18.5 5.5 H20.5 V9.5 H18.5" />
          <path d="M6 5 h7 v6 h-7z M0.5 2 h5 v3 L4 7 H2 L0.5 5z M1 0 h1 v2 h-1z M4 0 h1 v2 h-1z" fill="#fff" stroke="none" />
          <path d="M3 7 V10.5 H5" />
        </svg>
        <svg width="17" height="16" fill="none" stroke="#fff" className="ml-3" aria-label="Wi-Fi">
          <path d="M1 15 A14 14 0 0 1 16 1 M4.5 15 A10.5 10.5 0 0 1 16 5 M8 15 A7 7 0 0 1 16 8.7" strokeWidth="1.2" />
          <circle cx="14" cy="13.5" r="2" fill="#fff" stroke="none" />
        </svg>
        <svg width="20" height="14" fill="none" stroke="#fff" className="ml-[11px]" aria-label="Muted">
          <path d="M0.5 4.5 H3 L7.5 0.8 V13.2 L3 9.5 H0.5 Z M11 3.5 L18 10.5 M18 3.5 L11 10.5" strokeWidth="1.2" />
        </svg>
        <div className="w-[93px] text-center text-[14px] leading-[23px]">
          <div>7:27 AM</div>
          <div>9/29/2017</div>
        </div>
        <button aria-label="Notifications" className="relative ml-[11px] h-7 w-[46px]">
          <svg width="20" height="20" aria-hidden="true">
            <path d="M0 0 H20 V15 H9 V20 L4 15 H0 Z" fill="#fff" />
            <path d="M4 4.5 H16 M4 8 H16 M4 11.5 H12" stroke="#111" />
          </svg>
          <span className="absolute left-[9px] top-[9px] flex h-[21px] w-[21px] items-center justify-center rounded-full border border-[#999] bg-[#222] text-[13px]">1</span>
        </button>
        <span className="mr-[4px] h-[50px] w-px bg-[#555]" />
      </div>
    </footer>
  );
}

export default function App() {
  return (
    <div className="flex h-screen w-full flex-col overflow-hidden bg-[#535353]">
      <MenuBar />
      <OptionsBar />
      <main className="flex min-h-0 flex-1 border-b border-[#3a3a3a]">
        <ToolBar />
        <Workspace />
        <RightDock />
      </main>
      <TaskBar />
    </div>
  );
}
